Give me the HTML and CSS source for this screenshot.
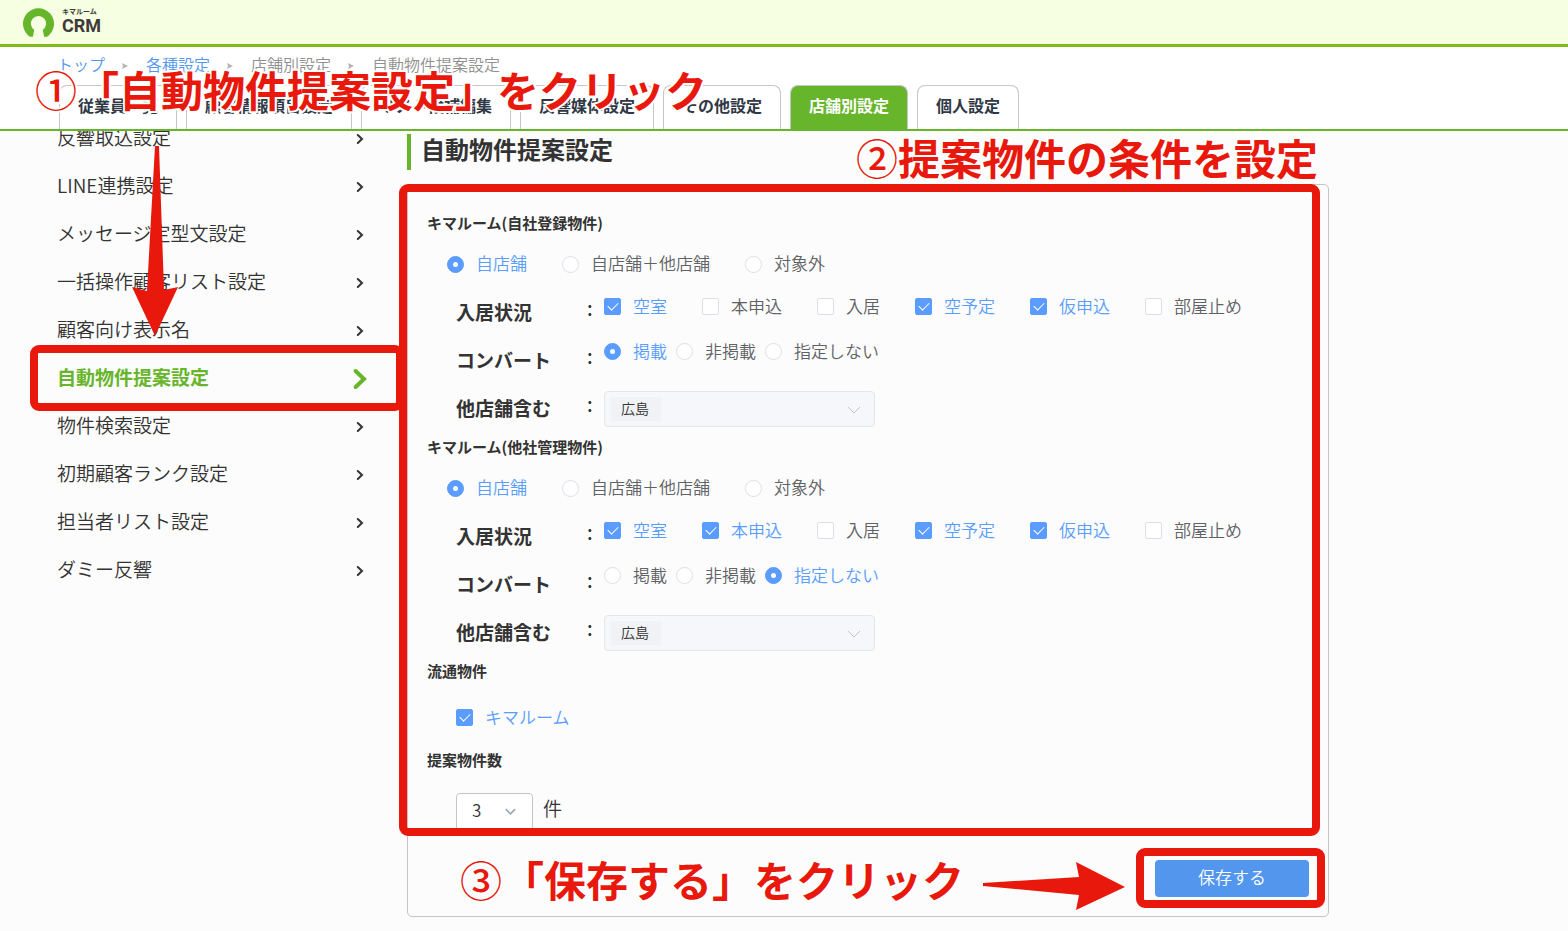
FILE: index.html
```html
<!DOCTYPE html>
<html lang="ja">
<head>
<meta charset="utf-8">
<title>キマルーム CRM - 自動物件提案設定</title>
<link rel="stylesheet" href="styles.css">
</head>
<body>
<svg class="defs" aria-hidden="true">
  <symbol id="chev" viewBox="0 0 10 12"><path d="M2.8 2 7 6 2.8 10" fill="none" stroke="currentColor" stroke-width="2" stroke-linecap="round"/></symbol>
  <symbol id="sep" viewBox="0 0 6 8"><path d="M0 1 6 4 0 7 1 4Z" fill="currentColor"/></symbol>
  <symbol id="down" viewBox="0 0 14 8"><path d="M1 1 7 7 13 1" fill="none" stroke="currentColor"/></symbol>
</svg>
<div class="top">
  <header class="brand">
    <svg class="brand-mark" viewBox="0 0 94 86"><path d="M21 86A47 47 0 1 1 73 86L64 86L60 65A23 23 0 1 0 34 65L30 86Z"/></svg>
    <div class="brand-name"><span class="brand-kana">キマルーム</span><span class="brand-crm">CRM</span></div>
  </header>
  <nav class="crumbs" aria-label="パンくず">
    <a href="#">トップ</a><svg><use href="#sep"/></svg><a href="#">各種設定</a><svg><use href="#sep"/></svg><span>店舗別設定</span><svg><use href="#sep"/></svg><span>自動物件提案設定</span>
  </nav>
  <nav class="tabs">
    <a href="#">従業員一覧</a><a href="#">顧客情報項目設定</a><a href="#">リスト候補編集</a><a href="#">反響媒体設定</a><a href="#">その他設定</a><a href="#" class="on">店舗別設定</a><a href="#">個人設定</a>
  </nav>
</div>
<div class="body">
  <nav class="side">
    <a href="#"><span>反響取込設定</span><svg><use href="#chev"/></svg></a>
    <a href="#"><span>LINE連携設定</span><svg><use href="#chev"/></svg></a>
    <a href="#"><span>メッセージ定型文設定</span><svg><use href="#chev"/></svg></a>
    <a href="#"><span>一括操作顧客リスト設定</span><svg><use href="#chev"/></svg></a>
    <a href="#"><span>顧客向け表示名</span><svg><use href="#chev"/></svg></a>
    <a href="#" class="on"><span>自動物件提案設定</span><svg><use href="#chev"/></svg></a>
    <a href="#"><span>物件検索設定</span><svg><use href="#chev"/></svg></a>
    <a href="#"><span>初期顧客ランク設定</span><svg><use href="#chev"/></svg></a>
    <a href="#"><span>担当者リスト設定</span><svg><use href="#chev"/></svg></a>
    <a href="#"><span>ダミー反響</span><svg><use href="#chev"/></svg></a>
  </nav>
  <main class="main">
    <h1>自動物件提案設定</h1>
    <form class="card">
      <section>
        <h2>キマルーム(自社登録物件)</h2>
        <div class="opts scope">
          <label><input type="radio" name="s1" checked><span>自店舗</span></label>
          <label><input type="radio" name="s1"><span>自店舗＋他店舗</span></label>
          <label><input type="radio" name="s1"><span>対象外</span></label>
        </div>
        <div class="row">
          <h3>入居状況</h3><span class="colon">:</span>
          <div class="opts state">
            <label><input type="checkbox" checked><span>空室</span></label>
            <label><input type="checkbox"><span>本申込</span></label>
            <label><input type="checkbox"><span>入居</span></label>
            <label><input type="checkbox" checked><span>空予定</span></label>
            <label><input type="checkbox" checked><span>仮申込</span></label>
            <label><input type="checkbox"><span>部屋止め</span></label>
          </div>
        </div>
        <div class="row">
          <h3>コンバート</h3><span class="colon">:</span>
          <div class="opts convert">
            <label><input type="radio" name="c1" checked><span>掲載</span></label>
            <label><input type="radio" name="c1"><span>非掲載</span></label>
            <label><input type="radio" name="c1"><span>指定しない</span></label>
          </div>
        </div>
        <div class="row">
          <h3><label for="shop1">他店舗含む</label></h3><span class="colon">:</span>
          <div class="pick"><select id="shop1" disabled><option>広島</option></select><svg><use href="#down"/></svg></div>
        </div>
      </section>
      <section>
        <h2>キマルーム(他社管理物件)</h2>
        <div class="opts scope">
          <label><input type="radio" name="s2" checked><span>自店舗</span></label>
          <label><input type="radio" name="s2"><span>自店舗＋他店舗</span></label>
          <label><input type="radio" name="s2"><span>対象外</span></label>
        </div>
        <div class="row">
          <h3>入居状況</h3><span class="colon">:</span>
          <div class="opts state">
            <label><input type="checkbox" checked><span>空室</span></label>
            <label><input type="checkbox" checked><span>本申込</span></label>
            <label><input type="checkbox"><span>入居</span></label>
            <label><input type="checkbox" checked><span>空予定</span></label>
            <label><input type="checkbox" checked><span>仮申込</span></label>
            <label><input type="checkbox"><span>部屋止め</span></label>
          </div>
        </div>
        <div class="row">
          <h3>コンバート</h3><span class="colon">:</span>
          <div class="opts convert">
            <label><input type="radio" name="c2"><span>掲載</span></label>
            <label><input type="radio" name="c2"><span>非掲載</span></label>
            <label><input type="radio" name="c2" checked><span>指定しない</span></label>
          </div>
        </div>
        <div class="row">
          <h3><label for="shop2">他店舗含む</label></h3><span class="colon">:</span>
          <div class="pick"><select id="shop2" disabled><option>広島</option></select><svg><use href="#down"/></svg></div>
        </div>
      </section>
      <section>
        <h2>流通物件</h2>
        <div class="opts market">
          <label><input type="checkbox" checked><span>キマルーム</span></label>
        </div>
      </section>
      <section>
        <h2><label for="count">提案物件数</label></h2>
        <div class="count">
          <div class="num"><select id="count"><option>3</option></select><svg><use href="#down"/></svg></div>
          <span>件</span>
        </div>
      </section>
      <footer class="actions"><button type="button">保存する</button></footer>
    </form>
  </main>
</div>
<div class="notes">
  <div class="frame frame-menu"></div>
  <div class="frame frame-form"></div>
  <div class="frame frame-save"></div>
  <p class="note note-1"><span class="step">①</span>「自動物件提案設定」をクリック</p>
  <p class="note note-2"><span class="step">②</span>提案物件の条件を設定</p>
  <p class="note note-3"><span class="step">③</span>「保存する」をクリック</p>
  <svg class="arrow arrow-down" viewBox="0 0 46 190"><path d="M23 0H27L32 144L46 141L23 190L0 141L15 145Z"/></svg>
  <svg class="arrow arrow-right" viewBox="0 0 142 48"><path d="M0 21L96 15L93 0L142 25L93 48L96 33L0 24Z"/></svg>
</div>
</body>
</html>
```
FILE: styles.css
```css
* { box-sizing: border-box; }
body {
  margin: 0;
  position: relative;
  background: #fcfcfc;
  color: #333;
  font-family: "Noto Sans CJK JP", sans-serif;
  font-size: 17px;
  font-weight: 350;
}
h1, h2, h3, p { margin: 0; }
a { color: inherit; text-decoration: none; }
.defs { display: none; }

.top {
  position: relative;
  z-index: 1;
  background: #fff;
  border-bottom: 2px solid #67b52b;
}
.brand {
  display: flex;
  align-items: center;
  gap: 8px;
  height: 47px;
  padding-left: 23px;
  background: #f6ffe1;
  border-bottom: 3px solid #7fbc1a;
}
.brand-mark { width: 31px; height: 29px; fill: #67b52b; }
.brand-name { display: grid; color: #3e3a39; font-weight: 700; }
.brand-kana { font-size: 7px; line-height: 7px; }
.brand-crm { font-family: Roboto, sans-serif; font-size: 18px; line-height: 22px; }
.crumbs {
  display: flex;
  align-items: center;
  height: 38px;
  padding: 0 0 4px 57px;
  color: #909090;
  font-size: 16px;
}
.crumbs a { color: #5296ee; }
.crumbs svg { width: 6px; height: 8px; margin: 4px 18px 0 17px; color: #b4b4b4; }
.tabs { display: flex; gap: 9px; padding-left: 59px; }
.tabs a {
  height: 44px;
  padding: 0 18px;
  border: 1px solid #c6c6c6;
  border-bottom: 0;
  border-radius: 8px 8px 0 0;
  color: #303846;
  font-size: 16px;
  font-weight: 700;
  line-height: 38px;
}
.tabs .on { background: #67b52b; color: #fff; }

.body { display: flex; max-width: 1329px; padding-left: 57px; }
.side { width: 350px; margin-top: -17px; padding-right: 40px; }
.side a {
  display: flex;
  align-items: center;
  justify-content: space-between;
  height: 48px;
  font-size: 19px;
}
.side span { padding-bottom: 4px; }
.side svg { width: 10px; height: 12px; margin: 2px 2px 0 0; }
.side .on { color: #67b52b; font-weight: 700; }
.side .on svg { width: 20px; height: 24px; margin-right: -3px; }

.main { flex: 1; padding-top: 3px; }
h1 {
  height: 36px;
  margin-bottom: 14px;
  padding-left: 10px;
  border-left: 4px solid #67b52b;
  font-size: 24px;
  font-weight: 700;
  line-height: 30px;
}
.card {
  padding: 23px 19px 19px;
  border: 1px solid #c4c4c4;
  border-radius: 5px;
}
h2 { padding-bottom: 4px; font-size: 15px; font-weight: 700; line-height: 30px; }
.opts { display: flex; align-items: center; color: #606266; }
.opts label { display: flex; align-items: center; gap: 12px; line-height: 24px; }
.opts span { padding-bottom: 2px; }
.opts input {
  appearance: none;
  display: grid;
  place-items: center;
  width: 17px;
  height: 17px;
  margin: 0;
  border: 1px solid #dcdfe6;
  border-radius: 2px;
  background: #fff;
}
.opts input[type="radio"] { border-radius: 50%; }
.opts input:checked { border-color: #5a9cff; background: #5a9cff; }
.opts input:checked + span { color: #5a9cff; }
.opts input:checked::before { content: ""; }
.opts [type="radio"]:checked::before { width: 5px; height: 5px; border-radius: 50%; background: #fff; }
.opts [type="checkbox"]:checked::before {
  width: 9px;
  height: 5px;
  margin-bottom: 3px;
  border: solid #fff;
  border-width: 0 0 1px 1px;
  transform: rotate(-45deg);
}
.scope { gap: 35px; height: 44px; margin-bottom: 2px; padding-left: 20px; }
.row {
  display: grid;
  grid-template-columns: 131px 17px 1fr;
  align-items: start;
  height: 48px;
  padding-left: 29px;
}
h3 { font-size: 19px; font-weight: 700; line-height: 48px; }
.colon { font-size: 19px; font-weight: 500; line-height: 40px; }
.state { gap: 35px; height: 37px; }
.convert { gap: 9px; height: 31px; }
.market { height: 55px; padding-left: 29px; }
select {
  appearance: none;
  width: 100%;
  font: inherit;
  color: #333;
  opacity: 1;
}
.pick, .num { position: relative; }
.pick { width: 271px; margin-top: 7px; font-size: 14px; }
.pick select {
  height: 36px;
  padding: 0 16px 3px;
  border: 1px solid #e4e7ed;
  border-radius: 4px;
  background: linear-gradient(#f0f2f5, #f0f2f5) 6px 5px / 50px 24px no-repeat #f5f7fa;
}
.pick svg, .num svg { position: absolute; pointer-events: none; }
.pick svg { top: 15px; right: 14px; width: 14px; height: 8px; color: #c0c4cc; stroke-width: 1; }
.count { display: flex; gap: 10px; padding: 14px 0 0 29px; font-size: 19px; line-height: 30px; }
.num { width: 77px; font-size: 17px; }
.num select {
  height: 38px;
  padding: 0 15px 4px;
  border: 1px solid #c4c4c4;
  border-radius: 4px;
  background: #fff;
}
.num svg { top: 15px; right: 17px; width: 11px; height: 7px; color: #9aa6b4; stroke-width: 2; }
.actions { display: flex; justify-content: flex-end; padding-top: 29px; }
.actions button {
  width: 154px;
  height: 37px;
  padding: 0 0 4px;
  border: 0;
  border-radius: 4px;
  background: #5296ee;
  color: #fff;
  font: inherit;
}

/* Annotation layer drawn over the page */
.notes { position: absolute; top: 0; left: 0; z-index: 2; pointer-events: none; }
.frame, .note, .arrow { position: absolute; }
.frame { border: 8px solid #e8190c; border-radius: 9px; }
.frame-menu { left: 30px; top: 345px; width: 374px; height: 66px; }
.frame-form { left: 399px; top: 184px; width: 921px; height: 652px; }
.frame-save { left: 1136px; top: 848px; width: 189px; height: 60px; }
.note {
  color: #e8190c;
  font-size: 42px;
  font-weight: 700;
  line-height: 50px;
  white-space: nowrap;
  -webkit-text-stroke: 4px #fff;
  paint-order: stroke fill;
}
.step { font-weight: 500; }
.note-1 { left: 35px; top: 64px; }
.note-2 { left: 856px; top: 132px; }
.note-3 { left: 460px; top: 854px; }
.arrow { fill: #e8190c; }
.arrow-down { left: 132px; top: 146px; width: 46px; height: 190px; }
.arrow-right { left: 983px; top: 862px; width: 142px; height: 48px; }
```
